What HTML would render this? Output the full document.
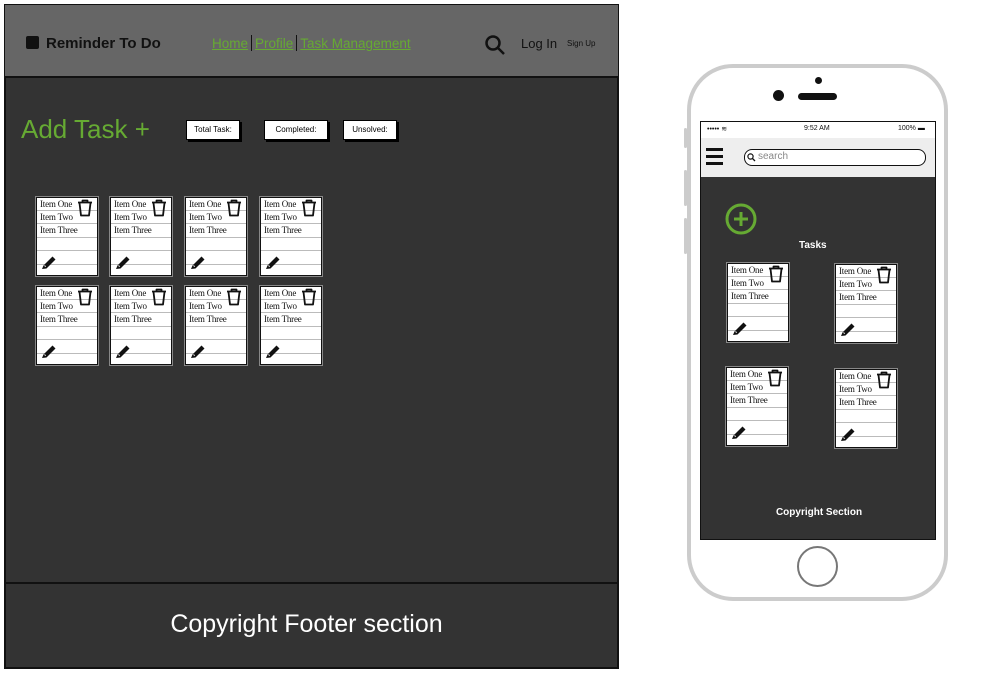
<!DOCTYPE html>
<html><head><meta charset="utf-8"><style>
*{box-sizing:border-box;margin:0;padding:0}
body{width:996px;height:690px;background:#fff;position:relative;overflow:hidden;font-family:"Liberation Sans",sans-serif}
.abs{position:absolute}
.card{position:absolute;width:62px;height:79px;background:#fff;border:1.5px solid #111;outline:1px solid #888;font-size:9px;color:#111;font-family:"Liberation Serif",serif}
.card .ln{position:absolute;left:0;right:0;height:1px;background:#bbb}
.card .t{position:absolute;left:3px;line-height:10px;letter-spacing:-0.2px}
.card svg{position:absolute}
.stat{position:absolute;top:120px;height:20px;background:#fff;border:1px solid #000;box-shadow:2px 2px 0 #000;font-size:8px;line-height:18px;text-align:center;color:#000}
</style></head><body>
<div class="abs" style="left:4px;top:4px;width:615px;height:665px;background:#333;border:2px solid #111"></div>
<div class="abs" style="left:5px;top:5px;width:613px;height:73px;background:#666;border-bottom:2px solid #111"></div>
<div class="abs" style="left:26px;top:36px;width:13px;height:13px;background:#111;border-radius:2px"></div>
<div class="abs" style="left:46px;top:35px;font-size:15px;font-weight:bold;color:#111">Reminder To Do</div>
<div class="abs" style="left:212px;top:35px;font-size:13.5px;color:#6a3;white-space:nowrap"><span style="text-decoration:underline">Home</span><span style="display:inline-block;width:1px;height:16px;background:#111;margin:0 3px -3px 3px"></span><span style="text-decoration:underline">Profile</span><span style="display:inline-block;width:1px;height:16px;background:#111;margin:0 3px -3px 3px"></span><span style="text-decoration:underline">Task Management</span></div>
<svg class="abs" style="left:484px;top:34px" width="24" height="22" viewBox="0 0 24 22"><circle cx="9" cy="9" r="6.5" fill="none" stroke="#111" stroke-width="2.5"/><line x1="14" y1="14" x2="20" y2="20" stroke="#111" stroke-width="2.5"/></svg>
<div class="abs" style="left:521px;top:36px;font-size:13px;color:#111">Log In</div>
<div class="abs" style="left:567px;top:39px;font-size:8px;color:#111">Sign Up</div>
<div class="abs" style="left:21px;top:114px;font-size:26px;color:#6a3">Add Task +</div>
<div class="stat" style="left:186px;width:54px">Total Task:</div>
<div class="stat" style="left:264px;width:64px">Completed:</div>
<div class="stat" style="left:343px;width:54px">Unsolved:</div>
<div class="abs" style="left:5px;top:582px;width:613px;height:86px;border-top:2px solid #111"></div>
<div class="abs" style="left:5px;top:610px;width:603px;text-align:center;font-size:25px;color:#fff">Copyright Footer section</div>

<div class="abs" style="left:687px;top:64px;width:261px;height:537px;border:4px solid #ccc;border-radius:46px;background:#fff"></div>
<div class="abs" style="left:684px;top:128px;width:3px;height:20px;background:#ccc;border-radius:2px"></div>
<div class="abs" style="left:684px;top:170px;width:3px;height:36px;background:#ccc;border-radius:2px"></div>
<div class="abs" style="left:684px;top:218px;width:3px;height:36px;background:#ccc;border-radius:2px"></div>
<div class="abs" style="left:815px;top:77px;width:7px;height:7px;background:#111;border-radius:50%"></div>
<div class="abs" style="left:773px;top:90px;width:11px;height:11px;background:#111;border-radius:50%"></div>
<div class="abs" style="left:798px;top:93px;width:39px;height:7px;background:#111;border-radius:4px"></div>
<div class="abs" style="left:797px;top:546px;width:41px;height:41px;border:2px solid #777;border-radius:50%"></div>
<div class="abs" style="left:700px;top:121px;width:236px;height:419px;background:#333;border:1px solid #111"></div>
<div class="abs" style="left:701px;top:122px;width:234px;height:16px;background:#fff;font-size:7px;color:#111">
  <span class="abs" style="left:6px;top:3px">••••• ≋</span>
  <span class="abs" style="left:103px;top:3px">9:52 AM</span>
  <span class="abs" style="left:197px;top:3px">100% ▬</span>
</div>
<div class="abs" style="left:701px;top:138px;width:234px;height:39px;background:#eee"></div>
<div class="abs" style="left:706px;top:148px;width:17px;height:3px;background:#111"></div>
<div class="abs" style="left:706px;top:155px;width:17px;height:3px;background:#111"></div>
<div class="abs" style="left:706px;top:162px;width:17px;height:3px;background:#111"></div>
<div class="abs" style="left:744px;top:149px;width:182px;height:17px;border:1.5px solid #111;border-radius:8px;background:#fff;font-size:10px;color:#888;padding-left:13px;line-height:14px">search</div>
<svg class="abs" style="left:747px;top:153px" width="9" height="9"><circle cx="3.5" cy="3.5" r="2.6" fill="none" stroke="#111" stroke-width="1.2"/><line x1="5.5" y1="5.5" x2="8" y2="8" stroke="#111" stroke-width="1.3"/></svg>
<svg class="abs" style="left:725px;top:203px" width="32" height="32"><circle cx="16" cy="16" r="14" fill="none" stroke="#6a3" stroke-width="3"/><path d="M16 9v14M9 16h14" stroke="#6a3" stroke-width="3"/></svg>
<div class="abs" style="left:799px;top:240px;font-size:10px;font-weight:bold;color:#fff">Tasks</div>
<div class="abs" style="left:701px;top:507px;width:236px;text-align:center;font-size:10px;font-weight:bold;color:#fff">Copyright Section</div>

<div id="cards"></div>
<script>
var pos=[[36,197],[110,197],[185,197],[260,197],[36,286],[110,286],[185,286],[260,286],[727,263],[835,264],[726,367],[835,369]];
var html='';
pos.forEach(function(p){
 html+='<div class="card" style="left:'+p[0]+'px;top:'+p[1]+'px">'+
 '<div class="ln" style="top:12px"></div><div class="ln" style="top:25px"></div><div class="ln" style="top:39px"></div><div class="ln" style="top:52px"></div><div class="ln" style="top:66px"></div>'+
 '<div class="t" style="top:1px">Item One</div><div class="t" style="top:14px">Item Two</div><div class="t" style="top:27px">Item Three</div>'+
 '<svg style="left:40px;top:1px" width="16" height="18" viewBox="0 0 16 18"><path d="M1 3.5h14M5.5 3.5V1.5h5v2M2.5 4l1.5 12.5h8l1.5-12.5" fill="none" stroke="#111" stroke-width="1.8" stroke-linejoin="round"/></svg>'+
 '<svg style="left:3px;top:55px" width="18" height="18" viewBox="0 0 18 18"><path d="M3.5 12.5l9-9 3 3-9 9L2 16z" fill="#111"/><path d="M4.5 12.5l1.2 1.2" stroke="#fff" stroke-width="1"/></svg>'+
 '</div>';
});
document.getElementById('cards').innerHTML=html;
</script>
</body></html>
